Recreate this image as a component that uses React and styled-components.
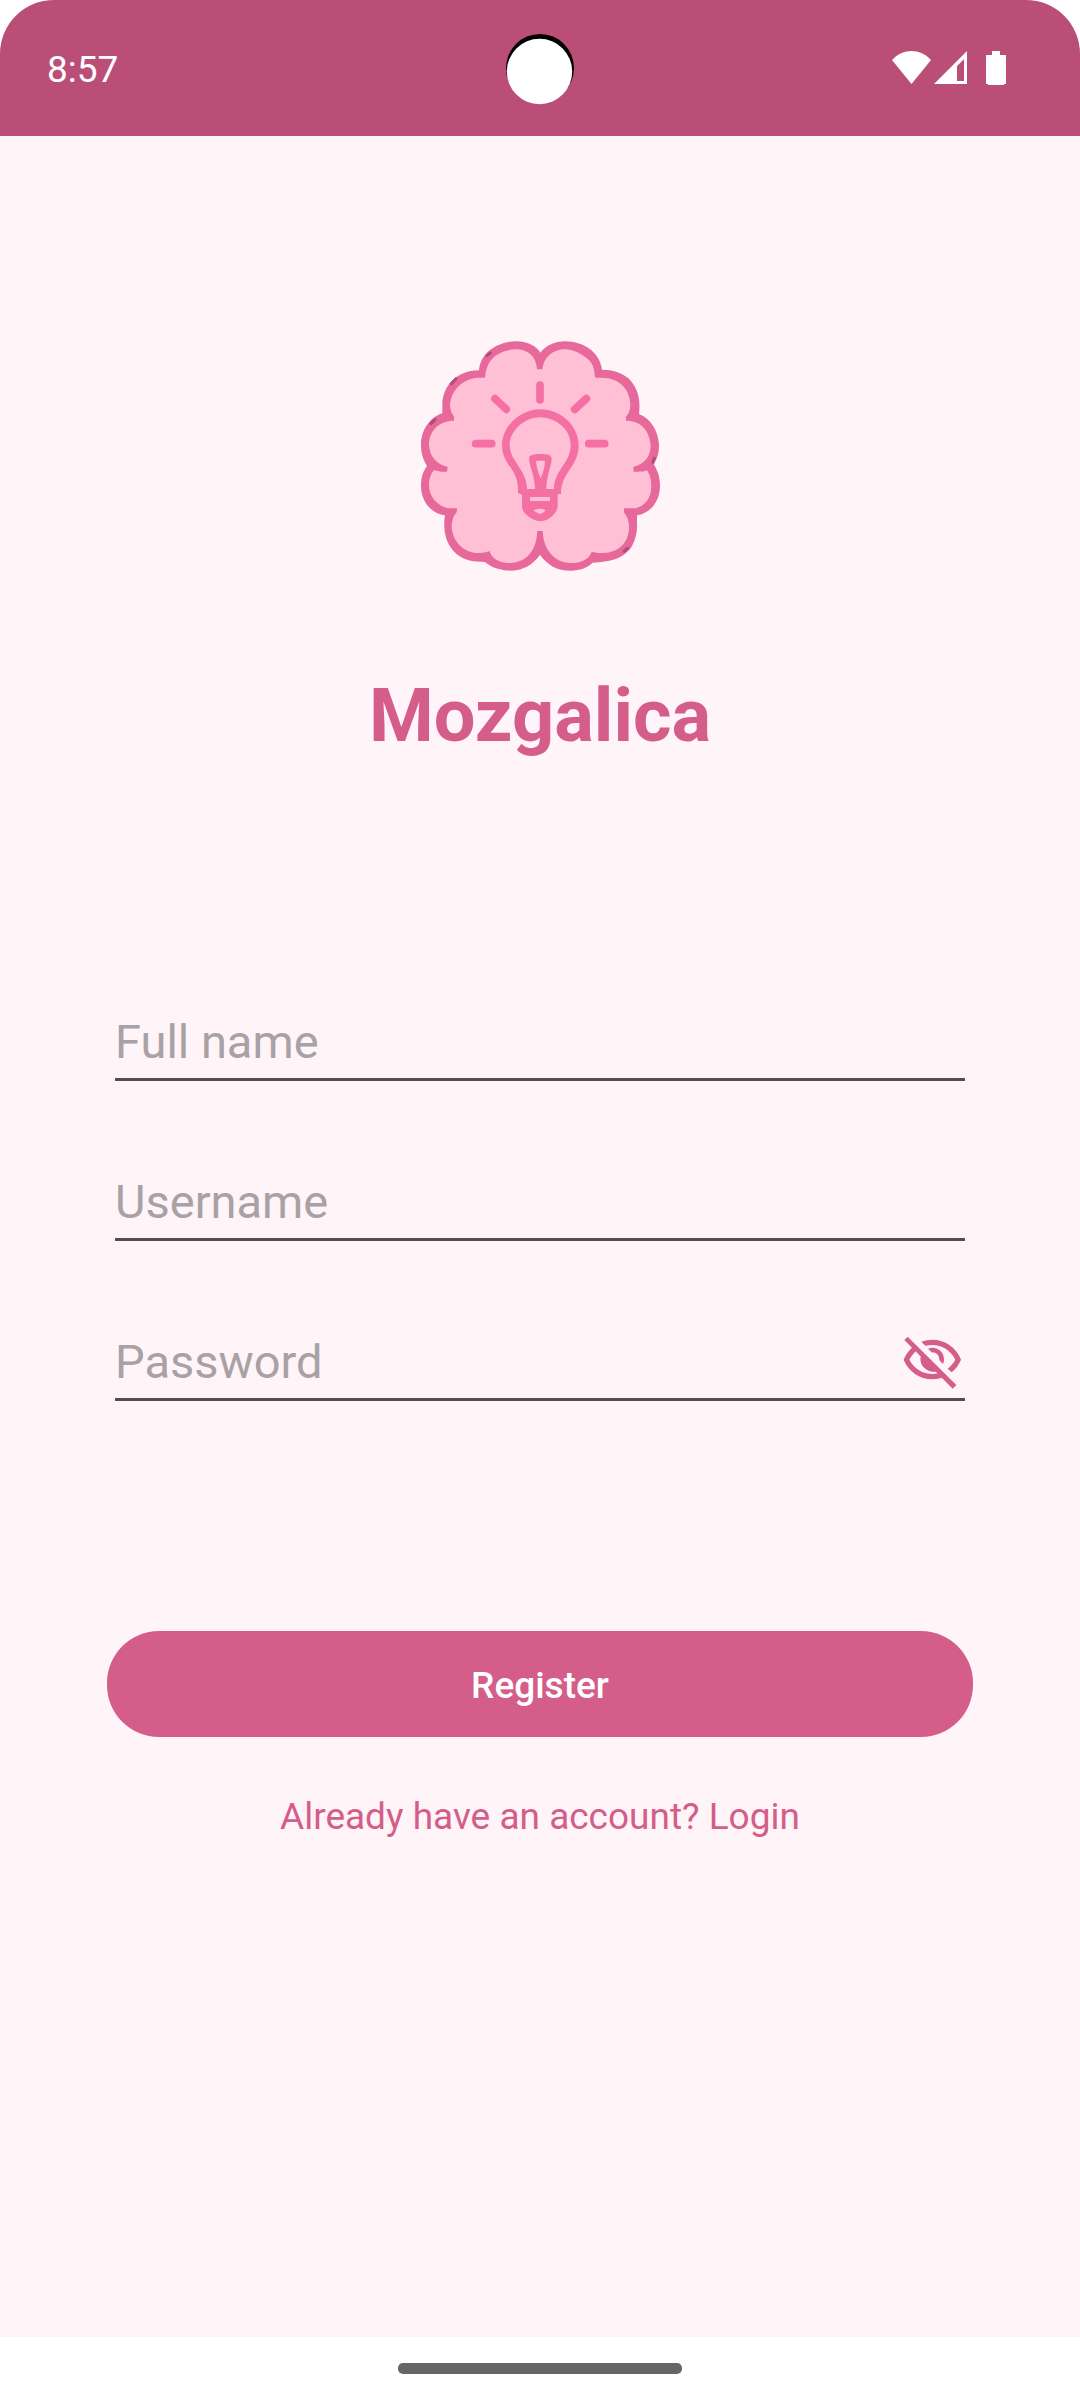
import React, { useState } from "react";
import styled, { createGlobalStyle } from "styled-components";

const GlobalStyle = createGlobalStyle`
  *, *::before, *::after {
    box-sizing: border-box;
  }

  body {
    margin: 0;
    background: #ffffff;
    font-family: Roboto, "Liberation Sans", sans-serif;
  }
`;

const Screen = styled.div`
  display: flex;
  flex-direction: column;
  min-height: 100vh;
  background: #ffffff;
`;

const StatusBar = styled.header`
  display: grid;
  grid-template-columns: 1fr auto 1fr;
  align-items: center;
  height: 136px;
  padding: 0 74px 0 47px;
  border-radius: 54px 54px 0 0;
  background: #bb4e76;
`;

const Clock = styled.time`
  padding-top: 4px;
  color: #ffffff;
  font-size: 37px;
  line-height: 44px;
`;

const Camera = styled.svg`
  width: 68px;
  height: 76px;
  margin-left: 27px;
`;

const StatusIcons = styled.div`
  display: flex;
  align-items: center;
  justify-content: flex-end;
`;

const StatusIcon = styled.svg`
  width: ${({ $width }) => $width}px;
  height: 34px;
  margin-left: ${({ $gap }) => $gap}px;
  fill: #ffffff;
`;

const Content = styled.main`
  display: flex;
  flex: 1;
  flex-direction: column;
  align-items: center;
  padding: 204px 107px 60px;
  background: #fff4f7;
`;

const Logo = styled.svg`
  width: 240px;
  height: 232px;
`;

const Title = styled.h1`
  margin: 100px 0 0;
  color: #d45d89;
  font-size: 74px;
  font-weight: 700;
  line-height: 88px;
`;

const Form = styled.form`
  display: flex;
  flex-direction: column;
  align-items: stretch;
  width: 100%;
  margin-top: 229px;
`;

const Fields = styled.div`
  display: flex;
  flex-direction: column;
  gap: 68px;
  padding: 0 8px;
`;

const Field = styled.div`
  display: flex;
  align-items: center;
  height: 92px;
  border-bottom: 3px solid #544b54;
`;

const TextInput = styled.input`
  flex: 1;
  min-width: 0;
  height: 88px;
  padding: 24px 0 8px;
  border: 0;
  outline: 0;
  background: transparent;
  color: #2b262a;
  font-family: inherit;
  font-size: 47px;
  line-height: 56px;

  &::placeholder {
    color: #a8a1a5;
    opacity: 1;
  }
`;

const EyeButton = styled.button`
  display: flex;
  padding: 18px 4px 0;
  border: 0;
  background: transparent;
  cursor: pointer;
`;

const EyeIcon = styled.svg`
  width: 58px;
  height: 53px;
`;

const RegisterButton = styled.button`
  height: 106px;
  margin-top: 230px;
  padding: 4px 0 0;
  border: 0;
  border-radius: 52px;
  background: #d45d89;
  color: #ffffff;
  font-family: inherit;
  font-size: 37px;
  font-weight: 500;
  line-height: 44px;
  cursor: pointer;
`;

const LoginLink = styled.a`
  margin-top: 58px;
  color: #d45d89;
  font-size: 37px;
  line-height: 44px;
  text-decoration: none;
`;

const NavigationBar = styled.footer`
  display: flex;
  align-items: center;
  justify-content: center;
  height: 63px;
  background: #ffffff;
`;

const Handle = styled.div`
  width: 284px;
  height: 11px;
  border-radius: 5px;
  background: #666666;
`;

function BrainLogo() {
  return (
    <Logo viewBox="30 30 720 696" role="img" aria-label="Brain with a light bulb">
      <path
        fill="#e7689a"
        d="M391 68C380 50 355 34 318 34C270 34 212 62 207 121C145 120 97 165 97 225V250C60 262 33 300 33 345C33 370 40 390 51 408C38 425 33 445 33 468C33 515 65 552 105 556C94 622 122 682 190 694L225 696C250 718 285 722 305 722C340 720 368 705 390 674C412 705 440 722 482 722C510 720 530 715 548 698C600 695 630 690 660 658C675 635 681 610 681 590V556C720 550 750 515 750 468C750 440 742 420 731 402C742 385 747 370 747 345C745 300 720 265 687 252C692 210 685 175 655 145C635 128 610 119 576 119C570 70 525 34 465 34C435 34 408 46 391 68Z"
      />
      <path
        fill="#ffbfd4"
        d="M381 118C379 78 352 58 318 58C260 60 228 90 225 143H205C160 145 120 180 120 230C122 245 127 252 132 260V272C90 272 57 300 57 345C60 385 82 402 113 411L111 425C98 426 85 425 72 420C60 435 57 450 57 468C58 500 80 525 112 535H141L140 547C128 560 126 575 125 590C128 635 160 668 205 669C220 669 230 666 239 663C243 685 270 700 300 699C350 698 380 660 382 603H398C400 660 435 698 480 699C515 700 540 685 545 665C560 669 570 669 580 669C625 668 655 640 657 595C658 575 652 560 642 547V535H678C710 525 724 500 724 468C724 450 720 435 711 421C700 426 685 425 671 425L670 411C700 402 722 385 722 345C718 300 692 272 648 272V260C657 250 661 240 661 225C661 180 630 143 575 143H558L554 138C554 120 550 95 524 80C505 66 485 58 460 58C430 60 401 80 397 118Z"
      />
      <g stroke="#ae4c7b" strokeWidth="9" strokeLinecap="round">
        <path d="M231 77L241 69M124 161L138 146M63 281L75 269M729 397L733 385M642 664L652 655" />
      </g>
      <g stroke="#f56fa5" strokeWidth="23" strokeLinecap="round">
        <path d="M390 165V210M255 206L289 238M529 206L494 238M197 341H245M536 341H584" />
      </g>
      <path
        fill="#f470a2"
        fillRule="evenodd"
        d="M391 238C335 238 277 285 276 345C277 412 327 410 324 489L336 494V530C337 555 375 574 391 574C410 574 440 555 443 530V492H453C453 425 506 412 506 345C505 285 450 238 391 238ZM388 262C340 263 299 305 299 345C300 395 352 420 351 477H375C375 440 358 410 357 385C358 375 370 372 391 372C415 372 425 375 425 388C424 410 409 440 409 477H432C432 420 482 400 482 345C482 300 440 262 388 262ZM378 392H405C404 415 398 430 392 445C386 430 380 415 378 392ZM360 501H420V513H360ZM371 541C381 535 397 535 407 541C400 548 395 552 390 552C384 550 376 546 371 541Z"
      />
    </Logo>
  );
}

function HiddenEye() {
  return (
    <EyeIcon viewBox="130 80 174 159" aria-hidden="true" fill="#d45d89">
      <path d="M134 92L144 82L290 227L279 238Z" />
      <path d="M162 111L173 122C163 130 155 140 149 151C163 178 190 194 218 194C225 194 232 193 239 191L252 204C241 208 230 210 218 210C180 210 146 186 132 151C138 136 148 122 162 111Z" />
      <path d="M185 97C196 93 207 91 218 91C256 91 290 114 304 151C298 166 288 179 276 189L264 178C274 170 281 161 287 151C273 123 247 107 218 107C211 107 204 108 197 109Z" />
      <path d="M184 140L228 184L232 187C206 190 182 174 182 148Z" />
      <path d="M205 118C229 108 254 126 253 151C253 156 252 160 250 164L239 153C240 139 231 129 216 129Z" />
    </EyeIcon>
  );
}

export default function App() {
  const [visible, setVisible] = useState(false);

  return (
    <Screen>
      <GlobalStyle />
      <StatusBar>
        <Clock>8:57</Clock>
        <Camera viewBox="0 -3 68 76" aria-hidden="true">
          <circle cx="34" cy="35" r="34" fill="#000000" />
          <circle cx="33.5" cy="38.5" r="32.7" fill="#ffffff" />
        </Camera>
        <StatusIcons>
          <StatusIcon $width={39} $gap={0} viewBox="0 0 39 34" aria-hidden="true">
            <path d="M0 9C11 -3 28 -3 39 9L19.500 33Z" />
          </StatusIcon>
          <StatusIcon $width={33} $gap={3} viewBox="0 0 33 34" aria-hidden="true">
            <path fillRule="evenodd" d="M0 33L33 0V33ZM23 15V30H30V8Z" />
          </StatusIcon>
          <StatusIcon $width={20} $gap={19} viewBox="0 0 20 34" aria-hidden="true">
            <path d="M6 0H14V4H20V33H18V34H2V33H0V4H6Z" />
          </StatusIcon>
        </StatusIcons>
      </StatusBar>

      <Content>
        <BrainLogo />
        <Title>Mozgalica</Title>
        <Form onSubmit={(event) => event.preventDefault()}>
          <Fields>
            <Field>
              <TextInput type="text" aria-label="Full name" placeholder="Full name" />
            </Field>
            <Field>
              <TextInput type="text" aria-label="Username" placeholder="Username" />
            </Field>
            <Field>
              <TextInput
                type={visible ? "text" : "password"}
                aria-label="Password"
                placeholder="Password"
              />
              <EyeButton
                type="button"
                aria-label="Show password"
                aria-pressed={visible}
                onClick={() => setVisible(!visible)}
              >
                <HiddenEye />
              </EyeButton>
            </Field>
          </Fields>
          <RegisterButton type="submit">Register</RegisterButton>
        </Form>
        <LoginLink href="#login">Already have an account? Login</LoginLink>
      </Content>

      <NavigationBar>
        <Handle />
      </NavigationBar>
    </Screen>
  );
}
